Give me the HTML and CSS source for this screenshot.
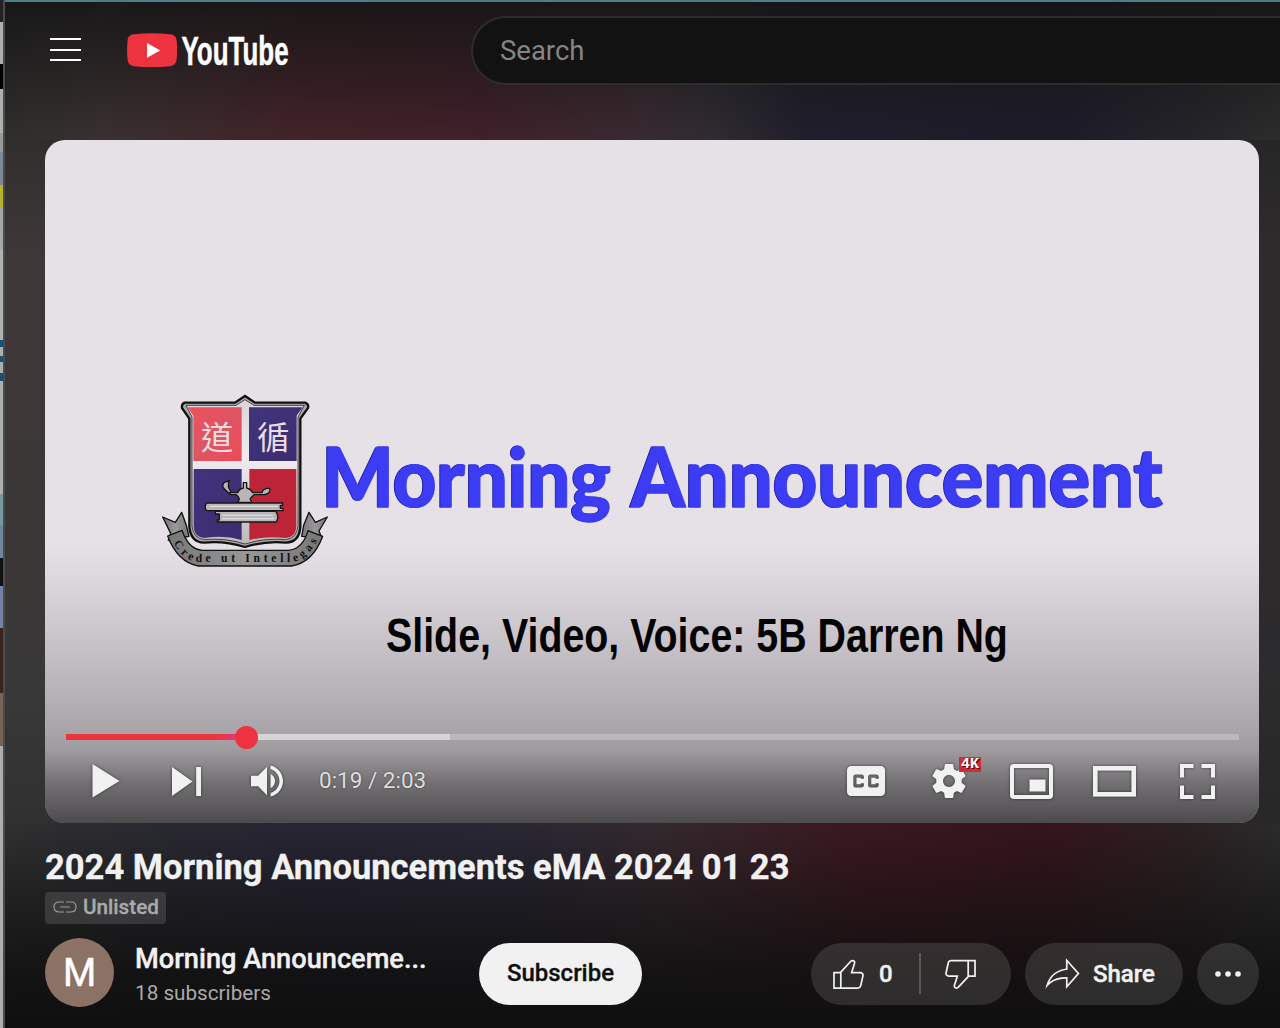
FILE: index.html
```html
<!DOCTYPE html>
<html lang="en">
<head>
<meta charset="utf-8">
<title>2024 Morning Announcements eMA 2024 01 23 - YouTube</title>
<link rel="stylesheet" href="styles.css">
</head>
<body>
<div class="window-edge"></div>
<main class="app">
  <header class="masthead">
    <div class="menu-button"><span></span><span></span><span></span></div>
    <svg class="logo" width="174" height="48" viewBox="0 0 174 48">
      <path d="M7 3.300Q25 1.200 43 3.300Q49 4 49.600 9Q50.600 19 49.600 29Q49 34.500 43 35.200Q25 37 7 35.200Q1 34.500.6 29Q-.4 19 .6 9Q1 4 7 3.300Z" fill="#ed333f"/>
      <path d="M20 12V26.800L33.300 19.400Z" fill="#fff"/>
      <text class="logo-text" transform="translate(54.500 34) scale(.63 1)" textLength="170" lengthAdjust="spacingAndGlyphs">YouTube</text>
    </svg>
    <div class="search">Search</div>
  </header>

  <section class="player">
    <svg class="frame" width="1214" height="683" viewBox="45 140 1214 683">
      <defs>
        <linearGradient id="red" x2="1" y2="1"><stop stop-color="#f0505c"/><stop offset=".5" stop-color="#df5562"/><stop offset="1" stop-color="#ef4958"/></linearGradient>
        <linearGradient id="blue" x2="1" y2="1"><stop stop-color="#41347d"/><stop offset="1" stop-color="#3c2c70"/></linearGradient>
        <linearGradient id="cross" x2="0" y2="1"><stop stop-color="#d9d5d8"/><stop offset=".4" stop-color="#f0ecef"/><stop offset="1" stop-color="#bcb9bb"/></linearGradient>
        <linearGradient id="ribbon" x2="1"><stop stop-color="#777"/><stop offset=".5" stop-color="#999"/><stop offset="1" stop-color="#777"/></linearGradient>
        <path id="motto" d="M71 474Q102 531 150 531H420Q468 531 503 464"/>
      </defs>
      <svg x="150" y="385" width="190" height="190" viewBox="0 0 570 570">
        <path d="M104 53H255L285 33L315 53H466Q477 58 474 69L451 101V425Q448 472 408 473Q350 466 285 486Q220 466 162 473Q122 472 118 425V101L96 69Q94 57 104 53Z" fill="#aaa7aa" stroke="#111" stroke-width="7"/>
        <path d="M108 61H258L285 44L312 61H463L444 96V423Q440 461 406 464Q345 458 285 477Q225 458 164 464Q130 461 126 423V96Z" fill="url(#cross)" stroke="#444" stroke-width="3"/>
        <path d="M113 67H275V228H130V92Z" fill="url(#red)"/>
        <path d="M297 67H458L440 92V228H297Z" fill="url(#blue)"/>
        <path d="M131 252H275V465Q222 449 164 459Q131 457 131 421Z" fill="url(#blue)"/>
        <path d="M298 252H439V421Q439 457 406 459Q345 453 298 465Z" fill="#bd2438"/>
        <text class="seal" x="153" y="192">道</text>
        <text class="seal" x="322" y="192">循</text>
        <g fill="#b8b6b8" stroke="#171717" stroke-width="4" stroke-linejoin="round">
          <path d="M240 323H263Q267 312 280 309V293H290V309Q303 312 308 323H336Q338 309 359 310Q363 327 342 329H312Q303 337 300 342L306 352H264L268 342Q266 334 258 329H240Z"/>
          <path d="M239 325Q211 308 221 294L238 286Q230 306 243 320Z"/>
          <path d="M170 354H398V361H391V370H399V377H170Q161 366 170 354Z"/>
          <path d="M196 379H377Q389 394 379 411H202V405H208V387H196Z"/>
        </g>
        <path d="M180 364H383M217 391H369M217 401H373" stroke="#ddd" stroke-width="4"/>
        <g fill="url(#ribbon)" stroke="#111" stroke-width="4" stroke-linejoin="round">
          <path d="M38 396L76 412L95 382L109 421L117 454L55 466L62 445Z"/>
          <path d="M532 396L496 412L477 382L461 421L455 454L515 458L507 438Z"/>
          <path d="M53 453L96 436Q116 494 157 496H414Q458 493 474 437L518 454Q488 534 424 543H145Q83 532 53 453Z"/>
        </g>
        <text class="motto"><textPath href="#motto" textLength="482">Crede ut Intellegas</textPath></text>
      </svg>
      <g class="headline">
        <text x="322" y="507" textLength="289" lengthAdjust="spacingAndGlyphs">Morning</text>
        <text x="631" y="507" textLength="532" lengthAdjust="spacingAndGlyphs">Announcement</text>
      </g>
      <text class="credit" transform="translate(386 651.500) scale(.815 1)" textLength="763" lengthAdjust="spacingAndGlyphs">Slide, Video, Voice: 5B Darren Ng</text>
    </svg>
    <div class="chrome">
      <div class="progress"><div class="buffered"></div><div class="played"></div><div class="knob"></div></div>
      <div class="controls">
        <svg class="play" width="28" height="34" viewBox="0 0 28 34"><path d="M.5 0V33.500L27.500 17Z"/></svg>
        <svg class="next" width="29" height="29" viewBox="12 12 12 12"><path d="M12 24 20.500 18 12 12ZM22 12v12h2V12Z"/></svg>
        <svg class="volume" width="32" height="32" viewBox="8 9 18 18"><path d="M8 21h4l5 5V10l-5 5H8ZM19 14v8c1.480-.68 2.500-2.230 2.500-4s-1.020-3.260-2.500-4ZM19 11.290C21.890 12.150 24 14.830 24 18s-2.110 5.850-5 6.710v2.060c4.010-.91 7-4.490 7-8.770s-2.990-7.860-7-8.770Z"/></svg>
        <div class="time">0:19 / 2:03</div>
        <div class="right">
          <svg class="cc" width="38" height="30" viewBox="9 11 18 14" preserveAspectRatio="none"><path fill-rule="evenodd" d="M11 11C9.890 11 9 11.900 9 13V23C9 24.100 9.890 25 11 25H25C26.100 25 27 24.100 27 23V13C27 11.900 26.100 11 25 11ZM17 17H15.500V16.500H13.500V19.500H15.500V19H17V20C17 20.550 16.550 21 16 21H13C12.450 21 12 20.550 12 20V16C12 15.450 12.450 15 13 15H16C16.550 15 17 15.450 17 16ZM24 17H22.500V16.500H20.500V19.500H22.500V19H24V20C24 20.550 23.550 21 23 21H20C19.450 21 19 20.550 19 20V16C19 15.450 19.450 15 20 15H23C23.550 15 24 15.450 24 16Z"/></svg>
          <div class="settings">
            <svg width="34" height="34" viewBox="10 10 16 16"><path d="m23.940 18.780c.03-.25.05-.51.05-.78 0-.27-.02-.52-.05-.78l1.680-1.320c.15-.12.19-.33.09-.51l-1.600-2.760c-.09-.17-.31-.24-.48-.17l-1.990.8c-.41-.32-.86-.58-1.350-.78l-.3-2.120c-.02-.19-.19-.33-.39-.33h-3.200c-.2 0-.36.14-.39.33l-.3 2.120c-.48.2-.93.47-1.350.78l-1.990-.8c-.18-.07-.39 0-.48.17l-1.600 2.760c-.1.17-.05.39.09.51l1.680 1.320c-.03.25-.05.52-.05.78 0 .26.02.52.05.78l-1.680 1.320c-.15.12-.19.33-.09.51l1.600 2.760c.09.17.31.24.48.17l1.990-.8c.41.32.86.58 1.350.78l.3 2.120c.02.19.19.33.39.33h3.200c.2 0 .36-.14.39-.33l.3-2.120c.48-.2.93-.47 1.350-.78l1.990.8c.18.07.39 0 .48-.17l1.600-2.760c.09-.17.05-.39-.09-.51zm-5.940 2.010c-1.540 0-2.800-1.250-2.800-2.800 0-1.540 1.250-2.800 2.800-2.800 1.540 0 2.800 1.250 2.800 2.800 0 1.540-1.250 2.800-2.800 2.800z"/></svg>
            <span class="badge">4K</span>
          </div>
          <svg class="pip" width="43" height="35" viewBox="0 0 43 35"><rect x="2" y="2" width="39" height="31" rx="2" fill="none" stroke="#f1f1f1" stroke-width="4"/><path d="M19.500 15.500H35.500V27.500H19.500Z"/></svg>
          <svg class="theater" width="43" height="31" viewBox="0 0 43 31"><rect x="2.300" y="2.300" width="38.400" height="26" fill="none" stroke="#f1f1f1" stroke-width="4.600"/></svg>
          <svg width="35" height="35" viewBox="0 0 35 35"><path d="M0 0H13.500V4H4V13.500H0ZM21.500 0H35V13.500H31V4H21.500ZM0 21.500H4V31H13.500V35H0ZM31 21.500H35V35H21.500V31H31Z"/></svg>
        </div>
      </div>
    </div>
  </section>

  <section class="details">
    <h1>2024 Morning Announcements eMA 2024 01 23</h1>
    <div class="unlisted">
      <svg width="24" height="12" viewBox="0 0 24 12"><path d="M11 1H6Q1 1 1 6T6 11H11M13 1H18Q23 1 23 6T18 11H13M7 6H17" fill="none" stroke="#999" stroke-width="1.200"/></svg>
      <span>Unlisted</span>
    </div>
    <div class="owner-row">
      <div class="avatar">M</div>
      <div class="owner"><div class="channel">Morning Announceme...</div><div class="subs">18 subscribers</div></div>
      <div class="subscribe">Subscribe</div>
      <div class="actions">
        <div class="pill rate">
          <svg width="41" height="41" viewBox="0 0 24 24"><path d="M18.770 11h-4.230l1.520-4.940C16.380 5.030 15.540 4 14.380 4c-.58 0-1.140.24-1.520.65L7 11H3v10h14.430c1.060 0 1.980-.67 2.190-1.610l1.340-6C21.230 12.150 20.180 11 18.770 11zM7 20H4v-8h3V20zM19.980 13.170l-1.340 6c-.1.48-.61.83-1.210.83H8v-8.610l5.600-6.060c.19-.21.48-.33.78-.33.26 0 .5.11.63.3.07.1.15.26.09.47l-1.520 4.940L13.180 12h5.590c.41 0 .8.17 1.030.46C19.920 12.610 20.050 12.860 19.980 13.170z"/></svg>
          <span class="count">0</span>
          <span class="divider"></span>
          <svg class="dislike" width="41" height="41" viewBox="0 0 24 24"><path d="M17 4H6.570c-1.070 0-1.980.67-2.190 1.610l-1.340 6C2.770 12.850 3.820 14 5.230 14h4.230l-1.520 4.940C7.620 19.970 8.460 21 9.620 21c.58 0 1.140-.24 1.520-.65L17 14h4V4H17zM10.400 19.670c-.21.21-.48.33-.78.33-.26 0-.5-.11-.63-.3-.07-.1-.15-.26-.09-.47l1.520-4.940.4-1.290H5.230c-.41 0-.8-.17-1.030-.46-.12-.15-.25-.4-.18-.72l1.340-6C5.460 5.350 5.970 5 6.570 5H16v8.610L10.400 19.670zM20 13h-3V5h3V13z"/></svg>
        </div>
        <div class="pill share">
          <svg width="41" height="41" viewBox="0 0 24 24"><path d="M15 5.630 20.660 12 15 18.370V14h-1c-3.960 0-7.140 1-9.750 3.090 1.840-4.070 5.110-6.400 9.890-7.100l.86-.13V5.630M14 3v6C6.220 10.130 3.110 15.330 2 21c2.780-3.970 6.440-6 12-6v6l8-9-8-9z"/></svg>
          <span>Share</span>
        </div>
        <div class="pill more"><svg width="28" height="8" viewBox="0 0 28 8"><circle cx="4" cy="4" r="2.800"/><circle cx="14" cy="4" r="2.800"/><circle cx="24" cy="4" r="2.800"/></svg></div>
      </div>
    </div>
  </section>
</main>
</body>
</html>
```

FILE: styles.css
```css
* { box-sizing: border-box; }
body {
  margin: 0;
  width: 1280px;
  height: 1028px;
  overflow: hidden;
  display: flex;
  background: #0f0f0f;
  font-family: Roboto, sans-serif;
  color: #f1f1f1;
}
svg { display: block; flex: none; }

.window-edge {
  width: 5px;
  flex: none;
  border-right: 2px solid #4b4b4b;
  background: linear-gradient(#222 0 22px, #adafad 22px 64px, #000 64px 89px, #adafad 89px 133px, #999b99 133px 152px, #7c8797 152px 185px, #b7b22c 185px 207px, #a5a6a5 207px 249px, #b0b2b0 249px 340px, #1d5070 340px 347px, #adafad 347px 356px, #1d5070 356px 362px, #adafad 362px 373px, #1d5070 373px 381px, #adafad 381px 494px, #7899a1 494px 525px, #6e859c 525px 558px, #111 558px 586px, #7282a6 586px 628px, #3a2420 628px 693px, #776257 693px 746px, #adafad 746px);
}
.app {
  width: 1275px;
  flex: none;
  padding-left: 40px;
  border-top: 2px solid #4a7f88;
  background:
    linear-gradient(rgba(20,20,20,.85), rgba(20,20,20,.4) 55%, transparent) 0 0 / 100% 138px no-repeat,
    linear-gradient(90deg, #302e2d, #3a3031 100px, #432329 290px, #40202a 480px, #3a2a31 635px, #302c32 700px, #201e2c 800px, #1e1b29 1060px, #252429 1190px, #2c2c2d) 0 0 / 100% 138px no-repeat,
    linear-gradient(transparent, rgba(15,15,15,.5) 40%, rgba(15,15,15,.85) 72%, #0f0f0f) 0 821px / 100% 205px no-repeat,
    linear-gradient(90deg, #303030, #2a2a31 130px, #282535 300px, #292735 500px, #34292e 650px, #3b1820 850px, #35151c 1040px, #2c2022 1180px, #2b2b2b) 0 821px / 100% 205px no-repeat,
    linear-gradient(90deg, transparent 1200px, rgba(30,30,32,.5) 1225px) 0 138px / 100% 683px no-repeat,
    linear-gradient(#302e2d, #3e3938 120px, #3c3737 400px, #383839 560px, #303030) 0 138px / 100% 683px no-repeat;
}

.masthead { height: 138px; display: flex; align-items: flex-start; }
.menu-button { width: 31px; margin: 36px 46px 0 5px; display: flex; flex-direction: column; gap: 8px; }
.menu-button span { height: 2px; background: #fff; }
.menu-button span + span { margin-top: .5px; }
.logo { margin-top: 29px; }
.logo-text { font: 700 40px "Liberation Sans", sans-serif; fill: #fff; stroke: #fff; stroke-width: .5px; }
.search {
  margin: 14px 0 0 170px;
  flex: 1;
  height: 69px;
  border: 2px solid #2d2d2d;
  border-right: 0;
  border-radius: 35px 0 0 35px;
  background: #121212;
  padding-left: 27px;
  font-size: 27.500px;
  line-height: 65px;
  color: #858585;
}

.player { width: 1214px; height: 683px; border-radius: 20px; overflow: hidden; background: #e6e1e7; position: relative; }
.seal { font-family: "Noto Sans CJK TC", sans-serif; font-size: 97px; font-weight: 400; fill: #eadde1; }
.motto { font: 700 35px "Liberation Serif", serif; fill: #111; }
.headline { font: 900 82px Lato, sans-serif; fill: #3c3cf5; stroke: #3c3cf5; stroke-width: 1px; filter: drop-shadow(-1px 0 0 #20209f); }
.credit { font: 700 48px "Liberation Sans", sans-serif; fill: #050505; }
.chrome {
  position: absolute;
  inset: 405px 0 0 0;
  padding: 189px 20px 0 21px;
  background: linear-gradient(rgba(0,0,0,0), rgba(0,0,0,.04) 30px, rgba(0,0,0,.16) 115px, rgba(0,0,0,.265) 185px, rgba(0,0,0,.31) 205px, rgba(0,0,0,.5) 238px, rgba(0,0,0,.67) 278px);
}
.progress { height: 6px; background: #bab8bb; position: relative; }
.buffered { width: 384px; height: 6px; background: #d6d4d5; }
.played { position: absolute; top: 0; left: 0; width: 181px; height: 6px; background: linear-gradient(90deg, #ed333b 148px, #e23b78 175px); }
.knob { position: absolute; top: -8px; left: 169px; width: 23px; height: 23px; border-radius: 50%; background: #ed333f; }
.controls { height: 82px; display: flex; align-items: center; padding: 0 24px 0 26px; fill: #f1f1f1; }
.controls svg { filter: drop-shadow(0 0 1.500px rgba(0,0,0,.55)); }
.next { margin-left: 52px; }
.volume { margin-left: 50px; }
.time { margin: -2px 0 0 36px; font-size: 22.500px; color: #dedede; text-shadow: 0 0 2px rgba(0,0,0,.5); white-space: nowrap; }
.right { margin-left: auto; display: flex; align-items: center; }
.settings { margin: 0 44px 0 47px; position: relative; }
.badge { position: absolute; left: 27px; top: -7px; width: 22px; height: 15px; background: #cd2c38; font: 700 15px/15px "Liberation Mono", monospace; text-align: center; color: #fff; text-shadow: 1px 1px 0 #400; }
.theater { margin: 0 44px 0 40px; }

h1 { margin: 24px 0 0; font-size: 34.500px; font-weight: 700; line-height: 40px; white-space: nowrap; -webkit-text-stroke: .3px #f1f1f1; }
.unlisted { margin-top: 5px; width: 121px; height: 32px; border-radius: 4px; background: rgba(255,255,255,.13); display: flex; align-items: center; padding: 0 0 2px 8px; gap: 6px; color: #aaa; font-size: 20.700px; font-weight: 500; -webkit-text-stroke: .3px #aaa; }
.owner-row { margin-top: 13px; height: 70px; display: flex; align-items: center; }
.avatar { width: 69px; height: 69px; border-radius: 50%; background: #8c7165; font-size: 38px; line-height: 71px; text-align: center; color: #fff; -webkit-text-stroke: .5px #fff; }
.owner { margin: 8px 0 0 21px; width: 344px; white-space: nowrap; }
.channel { font-size: 27.200px; font-weight: 500; line-height: 35px; -webkit-text-stroke: .4px #f1f1f1; }
.subs { font-size: 20.700px; line-height: 33px; color: #aaa; }
.subscribe { width: 163px; height: 62px; border-radius: 31px; background: #f1f1f1; color: #0f0f0f; font-size: 24px; font-weight: 500; line-height: 61px; text-align: center; margin-top: 3px; -webkit-text-stroke: .3px #0f0f0f; }
.actions { display: flex; gap: 14px; margin: 3px 0 0 169px; }
.pill { height: 62px; border-radius: 31px; background: rgba(255,255,255,.12); display: flex; align-items: center; font-size: 24px; font-weight: 500; fill: #f1f1f1; flex: none; }
.pill span { -webkit-text-stroke: .4px #f1f1f1; }
.rate { width: 200px; padding-left: 17px; }
.count { margin-left: 10px; width: 30px; }
.divider { width: 2px; height: 41px; margin-left: 10px; background: rgba(255,255,255,.2); }
.dislike { margin-left: 19px; }
.share { width: 158px; padding-left: 17px; gap: 10px; }
.more { width: 62px; justify-content: center; }
```
